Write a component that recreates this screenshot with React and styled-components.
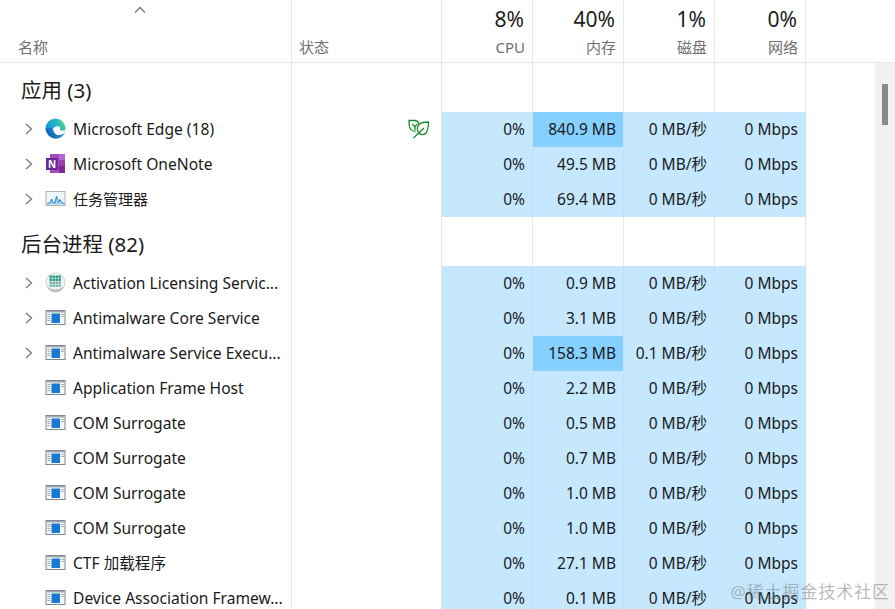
import React from 'react';
import styled, { createGlobalStyle } from 'styled-components';

const FONT = `"Noto Sans", "Noto Sans CJK SC", sans-serif`;
const COLUMNS = '292px 150px 91px 91px 91px 91px';

const GlobalStyle = createGlobalStyle`
    html, body { margin: 0; padding: 0; background: #fff; }
    #root { height: 100vh; overflow: hidden; }
`;

const Page = styled.div`
    position: relative;
    height: 609px;
    overflow: hidden;
    font-family: ${FONT};
    color: #1a1a1a;
    background: #fff;
`;

const Header = styled.header`
    display: grid;
    grid-template-columns: ${COLUMNS};
    height: 62px;
    border-bottom: 1px solid #e6e6e6;
`;

const HeadCell = styled.div`
    position: relative;
    display: flex;
    flex-direction: column;
    justify-content: flex-end;
    align-items: ${p => (p.$right ? 'flex-end' : 'flex-start')};
    padding: 0 ${p => (p.$right ? '7px' : '0')} 6px ${p => p.$left || '0'};
    border-right: 1px solid #e6e6e6;
    box-sizing: border-box;
`;

const Percent = styled.div`
    font-size: 21px;
    line-height: 28px;
    margin: 0 1px 5px 0;
    color: #1c1c1c;
`;

const Label = styled.div`
    font-size: 15px;
    line-height: 18px;
    color: #6f6f6f;
`;

const SortArrow = styled.svg`
    position: absolute;
    left: 134px;
    top: 6px;
`;

const Body = styled.div`
    display: flex;
`;

const Table = styled.div`
    flex: 1;
`;

const Track = styled.div`
    width: 20px;
    height: 547px;
    padding: 21px 7px 0;
    box-sizing: border-box;
    background: #f1f1f1;
`;

const Thumb = styled.div`
    width: 6px;
    height: 41px;
    background: #8a8a8a;
`;

const SectionRow = styled.div`
    display: grid;
    grid-template-columns: ${COLUMNS};
    height: 49px;
`;

const SectionCell = styled.div`
    border-right: 1px solid #e6e6e6;
    box-sizing: border-box;
`;

const SectionTitle = styled(SectionCell)`
    display: flex;
    align-items: center;
    padding: 3px 0 0 21px;
    font-size: 20.5px;
    color: #1a1a1a;
`;

const Row = styled.div`
    display: grid;
    grid-template-columns: ${COLUMNS};
    height: 35px;
`;

const NameCell = styled.div`
    display: flex;
    align-items: center;
    padding-bottom: 2px;
    border-right: 1px solid #e6e6e6;
    box-sizing: border-box;
    font-size: ${p => (p.$cjk ? '15px' : '15.6px')};
    white-space: nowrap;
    overflow: hidden;
`;

const Expander = styled.div`
    display: flex;
    justify-content: center;
    width: 45px;
    padding-left: 12px;
    box-sizing: border-box;
`;

const AppIcon = styled.div`
    display: flex;
    width: 21px;
    height: 21px;
    margin-right: 7px;
`;

const StatusCell = styled.div`
    display: flex;
    align-items: center;
    justify-content: flex-end;
    padding: 0 12px 2px 0;
    border-right: 1px solid #e6e6e6;
    box-sizing: border-box;
`;

const DataCell = styled.div`
    display: flex;
    align-items: center;
    justify-content: flex-end;
    padding: 0 7px 2px 0;
    font-size: 15.5px;
    color: #1a1a1a;
    white-space: nowrap;
    background: ${p => (p.$hot ? '#85d0ff' : '#c5e8ff')};
    border-right: 1px solid #bde2fb;
    box-sizing: border-box;
`;

const Watermark = styled.div`
    position: absolute;
    right: 5px;
    bottom: 6px;
    font-size: 17px;
    line-height: 22px;
    letter-spacing: 0.9px;
    color: rgba(120, 120, 120, 0.5);
`;

const Chevron = () => (
    <svg width="10" height="14" viewBox="0 0 10 14" fill="none">
        <path d="M2 2l5.500 5L2 12" stroke="#7d7d7d" strokeWidth="1.4" />
    </svg>
);

const EdgeIcon = () => (
    <svg width="21" height="21" viewBox="0 0 21 21">
        <defs>
            <linearGradient id="edgeA" x1="0" y1="0.5" x2="1" y2="0">
                <stop offset="0" stopColor="#1a8fdc" />
                <stop offset="0.55" stopColor="#22b6c8" />
                <stop offset="1" stopColor="#6be06a" />
            </linearGradient>
            <linearGradient id="edgeB" x1="0" y1="1" x2="1" y2="0.6">
                <stop offset="0" stopColor="#0a4f9e" />
                <stop offset="1" stopColor="#2a9fe4" />
            </linearGradient>
        </defs>
        <circle cx="10.5" cy="10.5" r="10" fill="url(#edgeA)" />
        <path d="M8 12c0-3 3-4.500 6-3.500 1.500.5 1.500 2.500 1 4h6l-1.500 5H11z" fill="#ffffff" />
        <path d="M8 11.500c0 3.500 3 5.500 6 5.500 2.500 0 4.800-1 6.300-3.200C19 18 15 20.500 11 20.500 5.500 20.500 1.500 16 .6 10.500c1.800-1.500 4.500-1.800 7.400 1z" fill="url(#edgeB)" />
    </svg>
);

const OneNoteIcon = () => (
    <svg width="21" height="21" viewBox="0 0 21 21">
        <rect x="5" y="1" width="15" height="19" fill="#a64ac0" />
        <rect x="14" y="1" width="6" height="6" fill="#b768cf" />
        <rect x="14" y="7" width="6" height="6" fill="#9a3fb5" />
        <rect x="14" y="13" width="6" height="7" fill="#7c2a99" />
        <rect x="1" y="5" width="12" height="12" fill="#6b2a9a" />
        <text x="7" y="14.500" fontSize="10" fontWeight="700" fill="#fff" textAnchor="middle" fontFamily={FONT}>N</text>
    </svg>
);

const PerfIcon = () => (
    <svg width="21" height="21" viewBox="0 0 21 21">
        <rect x="1" y="3.500" width="19" height="14" fill="#f0f5fa" stroke="#a9b4be" />
        <path d="M2 16l3-1 1.500-4 2 4 1.500 0 1.500-7 2 6.500 1.500-3 2 3.500 2.500.5v1H2z" fill="#a8d4f2" />
        <path d="M2 15.500l3-.5 1.500-4 2 4 1.500 0 1.500-7 2 6.500 1.500-3 2 3.500 2.500.5" fill="none" stroke="#2a86cf" strokeWidth="1" />
    </svg>
);

const ActivationIcon = () => {
    const dots = [];
    [3.5, 6.5, 9.5, 12.5].forEach((y, r) => {
        [4.5, 7.5, 10.5, 13.5].forEach((x, c) => {
            dots.push(<rect key={`${r}-${c}`} x={x} y={y} width="2.4" height="2.4" fill={r < 2 ? '#1f9488' : '#6fb5aa'} />);
        });
    });
    return (
        <svg width="21" height="21" viewBox="0 0 21 21">
            <circle cx="10.5" cy="10.5" r="9.500" fill="#f1f4f1" stroke="#d3d7d3" />
            <path d="M2.500 14.500c3 4 12 4 16 0-1 4-4.500 5.500-8 5.500s-7-1.500-8-5.500z" fill="#b9bfb9" />
            {dots}
        </svg>
    );
};

const WindowIcon = () => (
    <svg width="21" height="21" viewBox="0 0 21 21">
        <rect x="1" y="3.500" width="19" height="14" fill="#f7f8fa" stroke="#7f8790" />
        <rect x="1.500" y="4" width="18" height="1.500" fill="#a2a9b1" />
        <rect x="6.500" y="6.500" width="8.500" height="9.500" fill="#1779d2" />
        <path d="M2.500 7.500h3M2.500 9.500h3M2.500 11.500h3M2.500 13.500h3M16 7.500h3M16 9.500h3" stroke="#a6adb5" strokeWidth="1" />
    </svg>
);

const LeafIcon = () => (
    <svg width="22" height="20" viewBox="0 0 22 20" fill="none" stroke="#1f8a2c" strokeWidth="1.300">
        <path d="M12 5.500C11.500 3 10 1.500 7.500 1.500H2c0 3.500 0 6.500 1.500 8.500 1 1.500 2.800 2.500 5 2.500" />
        <path d="M5.500 5L8 8l2-3M8 8v3" />
        <path d="M21.500 3c-3.500 0-7 .2-9 2-2.500 2.200-2.800 6-1 8.500 1.800 2.500 5.500 3 7.500.5 2.200-2.800 2.500-7 2.500-11z" />
        <path d="M6.500 19l10.500-10" />
    </svg>
);

const ICONS = {
    edge: EdgeIcon,
    onenote: OneNoteIcon,
    perf: PerfIcon,
    activation: ActivationIcon,
    window: WindowIcon,
};

const APPS = [
    { name: 'Microsoft Edge (18)', icon: 'edge', open: true, leaf: true, mem: '840.9 MB', hotMem: true },
    { name: 'Microsoft OneNote', icon: 'onenote', open: true, mem: '49.5 MB' },
    { name: '任务管理器', icon: 'perf', open: true, cjk: true, mem: '69.4 MB' },
];

const BACKGROUND = [
    { name: 'Activation Licensing Servic...', icon: 'activation', open: true, mem: '0.9 MB' },
    { name: 'Antimalware Core Service', icon: 'window', open: true, mem: '3.1 MB' },
    { name: 'Antimalware Service Execu...', icon: 'window', open: true, mem: '158.3 MB', hotMem: true, disk: '0.1 MB/秒' },
    { name: 'Application Frame Host', icon: 'window', mem: '2.2 MB' },
    { name: 'COM Surrogate', icon: 'window', mem: '0.5 MB' },
    { name: 'COM Surrogate', icon: 'window', mem: '0.7 MB' },
    { name: 'COM Surrogate', icon: 'window', mem: '1.0 MB' },
    { name: 'COM Surrogate', icon: 'window', mem: '1.0 MB' },
    { name: 'CTF 加载程序', icon: 'window', mem: '27.1 MB' },
    { name: 'Device Association Framew...', icon: 'window', mem: '0.1 MB' },
];

const METRICS = [
    { percent: '8%', label: 'CPU' },
    { percent: '40%', label: '内存' },
    { percent: '1%', label: '磁盘' },
    { percent: '0%', label: '网络' },
];

const Section = ({ title }) => (
    <SectionRow>
        <SectionTitle>{title}</SectionTitle>
        {[0, 1, 2, 3, 4].map(i => <SectionCell key={i} />)}
    </SectionRow>
);

const ProcessRow = ({ item }) => {
    const Icon = ICONS[item.icon];
    return (
        <Row>
            <NameCell $cjk={item.cjk}>
                <Expander>{item.open && <Chevron />}</Expander>
                <AppIcon><Icon /></AppIcon>
                {item.name}
            </NameCell>
            <StatusCell>{item.leaf && <LeafIcon />}</StatusCell>
            <DataCell>0%</DataCell>
            <DataCell $hot={item.hotMem}>{item.mem}</DataCell>
            <DataCell>{item.disk || '0 MB/秒'}</DataCell>
            <DataCell>0 Mbps</DataCell>
        </Row>
    );
};

export default function App() {
    return (
        <Page>
            <GlobalStyle />
            <Header>
                <HeadCell $left="18px">
                    <SortArrow width="12" height="8" viewBox="0 0 12 8" fill="none">
                        <path d="M1 6.500L6 1.500l5 5" stroke="#7d7d7d" strokeWidth="1.500" />
                    </SortArrow>
                    <Label>名称</Label>
                </HeadCell>
                <HeadCell $left="7px"><Label>状态</Label></HeadCell>
                {METRICS.map(m => (
                    <HeadCell $right key={m.label}>
                        <Percent>{m.percent}</Percent>
                        <Label>{m.label}</Label>
                    </HeadCell>
                ))}
            </Header>
            <Body>
                <Table>
                    <Section title="应用 (3)" />
                    {APPS.map(item => <ProcessRow key={item.name} item={item} />)}
                    <Section title="后台进程 (82)" />
                    {BACKGROUND.map((item, i) => <ProcessRow key={i} item={item} />)}
                </Table>
                <Track><Thumb /></Track>
            </Body>
            <Watermark>@稀土掘金技术社区</Watermark>
        </Page>
    );
}
